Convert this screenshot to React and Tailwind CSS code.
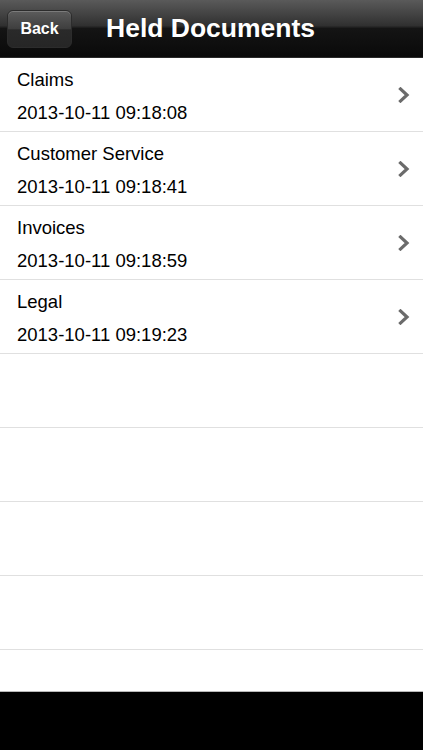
import React from "react";

const docs = [
  { name: "Claims", date: "2013-10-11 09:18:08" },
  { name: "Customer Service", date: "2013-10-11 09:18:41" },
  { name: "Invoices", date: "2013-10-11 09:18:59" },
  { name: "Legal", date: "2013-10-11 09:19:23" },
];

function Chevron() {
  return (
    <svg width="12" height="16" viewBox="0 0 12 16" className="shrink-0">
      <path d="M2.5 2 L9 8 L2.5 14" fill="none" stroke="#6b6b6b" strokeWidth="3.2" strokeLinecap="square" />
    </svg>
  );
}

export default function App() {
  return (
    <div className="w-[423px] h-[750px] flex flex-col bg-white overflow-hidden" style={{ fontFamily: '"Liberation Sans", Arial, sans-serif' }}>
      {/* Nav bar */}
      <div className="h-[58px] shrink-0 flex items-center bg-[linear-gradient(to_bottom,#5a5a5a_0%,#303030_45%,#141414_50%,#0a0a0a_100%)] border-b border-[#2a2a2a]">
        <button className="ml-[7px] w-[65px] h-[38px] rounded-[6px] border border-[#2c2c2c] bg-[linear-gradient(to_bottom,#5c5c5c_0%,#3e3e3e_50%,#2a2a2a_52%,#262626_100%)] shadow-[inset_0_1px_0_rgba(255,255,255,0.2)] text-white font-bold text-[16px] flex items-center justify-center">
          Back
        </button>
        <h1 className="ml-[34px] text-white font-bold text-[26.5px]">Held Documents</h1>
      </div>

      {/* List */}
      <div className="flex-1 flex flex-col">
        {docs.map((d) => (
          <div key={d.name} className="h-[74px] shrink-0 border-b border-[#e0e0e0] flex items-center pl-[17px] pr-[13px]">
            <div className="flex-1 flex flex-col text-black text-[18.5px] leading-[18px] gap-[15px] pt-[3px]">
              <span>{d.name}</span>
              <span>{d.date}</span>
            </div>
            <Chevron />
          </div>
        ))}
        {[0, 1, 2, 3].map((i) => (
          <div key={i} className="h-[74px] shrink-0 border-b border-[#e0e0e0]" />
        ))}
        <div className="flex-1 border-b border-[#b8b8b8]" />
      </div>

      {/* Bottom bar */}
      <div className="h-[58px] shrink-0 bg-black" />
    </div>
  );
}
